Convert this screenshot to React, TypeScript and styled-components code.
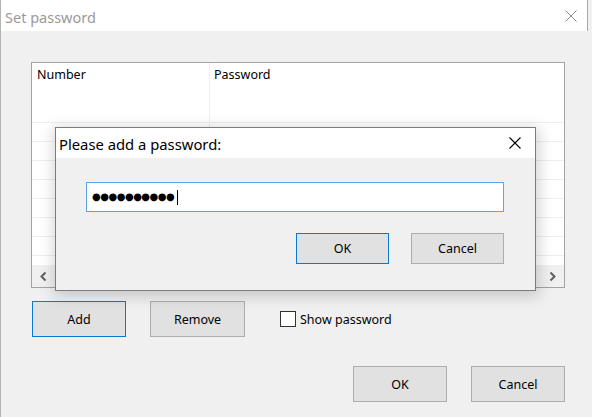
import React from 'react';
import styled, { createGlobalStyle } from 'styled-components';

const Global = createGlobalStyle`
  html, body { margin: 0; padding: 0; }
  body {
    width: 592px; height: 417px; overflow: hidden; background: #f0f0f0;
    font-family: "Noto Sans", "Liberation Sans", Arial, sans-serif;
  }
`;

const Window = styled.div`
  position: relative;
  width: 592px;
  height: 417px;
  box-sizing: border-box;
  background: #f0f0f0;
  border-left: 1px solid #b4b4b4;
  display: flex;
  flex-direction: column;
`;

const TitleBar = styled.div<{ $height: number }>`
  height: ${p => p.$height}px;
  flex: none;
  background: #ffffff;
  display: flex;
  align-items: center;
  justify-content: space-between;
  box-sizing: border-box;
`;

const MainTitleBar = styled(TitleBar)`
  margin-right: 4px;
  border-right: 1px solid #a8a8a8;
  padding-left: 4px;
`;

const TitleText = styled.span<{ $active?: boolean; $size: number }>`
  font-size: ${p => p.$size}px;
  color: ${p => (p.$active ? '#000000' : '#9a9a9a')};
  line-height: 20px;
  padding-top: 2px;
`;

const CloseBox = styled.span<{ $right: number }>`
  display: flex;
  align-items: center;
  justify-content: center;
  width: 12px;
  height: 12px;
  margin-right: ${p => p.$right}px;
`;

const Body = styled.div`
  flex: 1;
  padding: 31px 27px 0 30px;
  display: flex;
  flex-direction: column;
`;

const ListView = styled.div`
  width: 534px;
  height: 226px;
  box-sizing: border-box;
  border: 1px solid #a3a3a3;
  background: #ffffff;
  display: flex;
  flex-direction: column;
`;

const HeaderArea = styled.div`
  height: 60px;
  flex: none;
  display: flex;
  border-bottom: 1px solid #efefef;
  box-sizing: border-box;
`;

const Cell = styled.div<{ $width?: number }>`
  ${p => (p.$width ? `width: ${p.$width}px; flex: none;` : 'flex: 1;')}
  box-sizing: border-box;
  ${p => (p.$width ? 'border-right: 1px solid #f0f0f0;' : '')}
`;

const HeaderLabel = styled.div<{ $pad: number }>`
  font-size: 12.5px;
  color: #000;
  line-height: 16px;
  padding: 4px 0 0 ${p => p.$pad}px;
`;

const Rows = styled.div`
  flex: 1;
  overflow: hidden;
`;

const Row = styled.div`
  height: 19px;
  display: flex;
  border-bottom: 1px solid #efefef;
  box-sizing: border-box;
`;

const HScroll = styled.div`
  height: 22px;
  flex: none;
  display: flex;
  background: #f0f0f0;
`;

const ScrollArrow = styled.div`
  width: 23px;
  display: flex;
  align-items: center;
  justify-content: center;
`;

const Track = styled.div`
  flex: 1;
`;

const ButtonRow = styled.div<{ $top: number }>`
  display: flex;
  align-items: center;
  margin-top: ${p => p.$top}px;
`;

const BottomRow = styled(ButtonRow)`
  justify-content: flex-end;
  gap: 24px;
`;

const Button = styled.div<{ $w: number; $h: number; $focused?: boolean; $ml?: number }>`
  width: ${p => p.$w}px;
  height: ${p => p.$h}px;
  margin-left: ${p => p.$ml ?? 0}px;
  box-sizing: border-box;
  background: #e1e1e1;
  border: 1px solid ${p => (p.$focused ? '#0a78d4' : '#adadad')};
  display: flex;
  align-items: center;
  justify-content: center;
  font-size: 12.5px;
  color: #000;
  flex: none;
`;

const CheckBox = styled.span`
  width: 16px;
  height: 16px;
  box-sizing: border-box;
  border: 1px solid #333333;
  background: #ffffff;
  margin-left: 35px;
  flex: none;
`;

const CheckLabel = styled.span`
  font-size: 12.5px;
  color: #000;
  margin-left: 4px;
`;

const Dialog = styled.div`
  position: absolute;
  left: 54px;
  top: 127px;
  width: 481px;
  height: 164px;
  box-sizing: border-box;
  border: 1px solid #7c7c7c;
  background: #f0f0f0;
  box-shadow: 1px 3px 14px 2px rgba(0, 0, 0, 0.18);
  display: flex;
  flex-direction: column;
`;

const DialogTitleBar = styled(TitleBar)`
  padding-left: 3px;
`;

const DialogBody = styled.div`
  flex: 1;
  padding: 24px 31px 0 30px;
  display: flex;
  flex-direction: column;
`;

const PasswordField = styled.div`
  height: 30px;
  box-sizing: border-box;
  border: 1px solid #5aa5e8;
  background: #ffffff;
  display: flex;
  align-items: center;
  padding-left: 5px;
`;

const Dots = styled.span`
  font-family: "DejaVu Sans", sans-serif;
  font-size: 10px;
  letter-spacing: -0.5px;
  color: #000;
  line-height: 14px;
`;

const Caret = styled.span`
  width: 1px;
  height: 15px;
  background: #000;
  margin-left: 3px;
`;

const DialogButtons = styled.div`
  display: flex;
  justify-content: flex-end;
  gap: 22px;
  margin-top: 21px;
`;

const XIcon = ({ color, w }: { color: string; w: number }) => (
  <svg width="12" height="12" viewBox="0 0 12 12">
    <path d="M0.5 0.5 L11.5 11.5 M11.5 0.5 L0.5 11.5" stroke={color} strokeWidth={w} fill="none" />
  </svg>
);

const Chevron = ({ dir }: { dir: 'left' | 'right' }) => (
  <svg width="9" height="11" viewBox="0 0 9 11">
    <path
      d={dir === 'left' ? 'M6.5 1.5 L2.5 5.5 L6.5 9.5' : 'M2.5 1.5 L6.5 5.5 L2.5 9.5'}
      stroke="#606060"
      strokeWidth="2"
      fill="none"
    />
  </svg>
);

export default function App() {
  const rows = Array.from({ length: 8 });
  return (
    <>
      <Global />
      <Window>
        <MainTitleBar $height={31}>
          <TitleText $size={14.5}>Set password</TitleText>
          <CloseBox $right={10}>
            <XIcon color="#8a8a8a" w={1} />
          </CloseBox>
        </MainTitleBar>
        <Body>
          <ListView>
            <HeaderArea>
              <Cell $width={178}>
                <HeaderLabel $pad={5}>Number</HeaderLabel>
              </Cell>
              <Cell>
                <HeaderLabel $pad={4}>Password</HeaderLabel>
              </Cell>
            </HeaderArea>
            <Rows>
              {rows.map((_, i) => (
                <Row key={i}>
                  <Cell $width={178} />
                  <Cell />
                </Row>
              ))}
            </Rows>
            <HScroll>
              <ScrollArrow>
                <Chevron dir="left" />
              </ScrollArrow>
              <Track />
              <ScrollArrow>
                <Chevron dir="right" />
              </ScrollArrow>
            </HScroll>
          </ListView>
          <ButtonRow $top={13}>
            <Button $w={94} $h={36} $focused $ml={1}>Add</Button>
            <Button $w={95} $h={36} $ml={24}>Remove</Button>
            <CheckBox />
            <CheckLabel>Show password</CheckLabel>
          </ButtonRow>
          <BottomRow $top={29}>
            <Button $w={94} $h={36}>OK</Button>
            <Button $w={94} $h={36}>Cancel</Button>
          </BottomRow>
        </Body>
        <Dialog>
          <DialogTitleBar $height={30}>
            <TitleText $active $size={14.8}>Please add a password:</TitleText>
            <CloseBox $right={14}>
              <XIcon color="#000000" w={1.1} />
            </CloseBox>
          </DialogTitleBar>
          <DialogBody>
            <PasswordField>
              <Dots>●●●●●●●●●●</Dots>
              <Caret />
            </PasswordField>
            <DialogButtons>
              <Button $w={93} $h={31} $focused>OK</Button>
              <Button $w={93} $h={31}>Cancel</Button>
            </DialogButtons>
          </DialogBody>
        </Dialog>
      </Window>
    </>
  );
}
